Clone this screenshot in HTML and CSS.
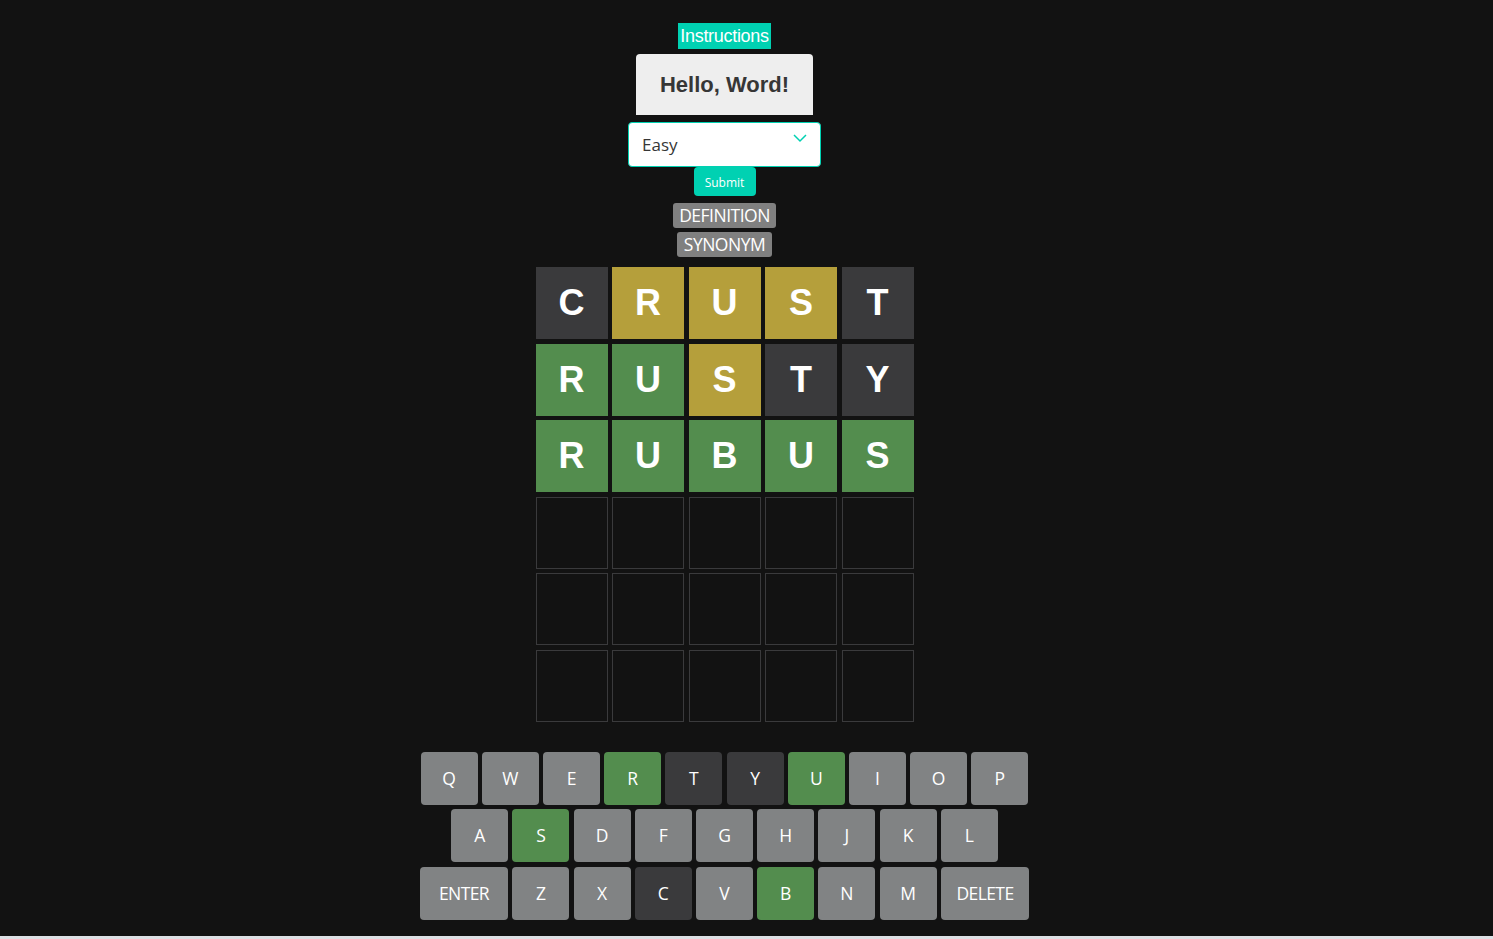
FILE: index.html
```html
<!DOCTYPE html>
<html>
<head>
<meta charset="utf-8">
<link rel="stylesheet" href="styles.css">
</head>
<body>
<div class="app">
  <div class="instructions">Instructions</div>
  <div class="title">Hello, Word!</div>
  <div class="select">
    <span class="select-text">Easy</span>
    <svg class="chev" width="14" height="9" viewBox="0 0 14 9"><path d="M1 1 L7 7 L13 1" fill="none" stroke="#00d1b2" stroke-width="1.5"/></svg>
  </div>
  <div class="submit">Submit</div>
  <div class="hint def">DEFINITION</div>
  <div class="hint syn">SYNONYM</div>
  <div class="board">
    <div class="tile absent">C</div><div class="tile present">R</div><div class="tile present">U</div><div class="tile present">S</div><div class="tile absent">T</div>
    <div class="tile correct">R</div><div class="tile correct">U</div><div class="tile present">S</div><div class="tile absent">T</div><div class="tile absent">Y</div>
    <div class="tile correct">R</div><div class="tile correct">U</div><div class="tile correct">B</div><div class="tile correct">U</div><div class="tile correct">S</div>
    <div class="tile empty"></div><div class="tile empty"></div><div class="tile empty"></div><div class="tile empty"></div><div class="tile empty"></div>
    <div class="tile empty"></div><div class="tile empty"></div><div class="tile empty"></div><div class="tile empty"></div><div class="tile empty"></div>
    <div class="tile empty"></div><div class="tile empty"></div><div class="tile empty"></div><div class="tile empty"></div><div class="tile empty"></div>
  </div>
  <div class="keyboard">
    <div class="krow">
      <div class="key">Q</div><div class="key">W</div><div class="key">E</div><div class="key kcorrect">R</div><div class="key kabsent">T</div><div class="key kabsent">Y</div><div class="key kcorrect">U</div><div class="key">I</div><div class="key">O</div><div class="key">P</div>
    </div>
    <div class="krow">
      <div class="key">A</div><div class="key kcorrect">S</div><div class="key">D</div><div class="key">F</div><div class="key">G</div><div class="key">H</div><div class="key">J</div><div class="key">K</div><div class="key">L</div>
    </div>
    <div class="krow last">
      <div class="key wide">ENTER</div><div class="key">Z</div><div class="key">X</div><div class="key kabsent">C</div><div class="key">V</div><div class="key kcorrect">B</div><div class="key">N</div><div class="key">M</div><div class="key wide">DELETE</div>
    </div>
  </div>
</div>
<div class="taskbar"></div>
</body>
</html>
```
FILE: styles.css
```css
html, body {
  margin: 0;
  padding: 0;
  background: #121212;
  height: 100%;
  overflow: hidden;
}
body {
  position: relative;
  font-family: "Liberation Sans", Arial, sans-serif;
}
.app {
  display: flex;
  flex-direction: column;
  align-items: center;
  padding-top: 23px;
  padding-right: 44px;
}
.instructions {
  background: #00d1b2;
  color: #fff;
  font-size: 18px;
  height: 26px;
  line-height: 26px;
  padding: 0 1px;
  width: 91px;
  text-align: center;
  letter-spacing: -0.3px;
}
.title {
  margin-top: 5px;
  width: 177px;
  height: 61px;
  background: #eeeeee;
  border-radius: 4px 4px 0 0;
  color: #363636;
  font-weight: bold;
  font-size: 22px;
  display: flex;
  align-items: center;
  justify-content: center;
}
.select {
  margin-top: 7px;
  box-sizing: border-box;
  width: 193px;
  height: 45px;
  background: #fff;
  border: 1px solid #00d1b2;
  border-radius: 4px;
  display: flex;
  align-items: center;
  justify-content: space-between;
  padding: 0 13px 0 13px;
  position: relative;
}
.select-text {
  font-family: "Open Sans", sans-serif;
  font-size: 17px;
  color: #363636;
}
.chev {
  margin-top: -12px;
}
.submit {
  width: 62px;
  height: 29px;
  background: #00d1b2;
  border-radius: 4px;
  color: #fff;
  font-family: "Open Sans", sans-serif;
  font-size: 12px;
  display: flex;
  align-items: center;
  justify-content: center;
  padding-top: 1px;
  box-sizing: border-box;
}
.hint {
  background: #808080;
  color: #fff;
  font-family: "Open Sans", sans-serif;
  font-size: 17.5px;
  height: 25px;
  line-height: 25px;
  border-radius: 3px;
  text-align: center;
}
.def {
  margin-top: 7px;
  width: 103px;
  letter-spacing: -0.5px;
}
.syn {
  margin-top: 4px;
  width: 95px;
  letter-spacing: -0.5px;
}
.board {
  margin-top: 10px;
  display: grid;
  grid-template-columns: repeat(5, 72px);
  grid-auto-rows: 72px;
  gap: 4.6px 4.5px;
}
.tile {
  box-sizing: border-box;
  display: flex;
  align-items: center;
  justify-content: center;
  color: #fff;
  font-weight: bold;
  font-size: 36px;
}
.absent { background: #3a3a3c; }
.present { background: #b59f3b; }
.correct { background: #538d4e; }
.empty { border: 1px solid #3a3a3c; }
.keyboard {
  margin-top: 30px;
  display: flex;
  flex-direction: column;
  align-items: center;
  gap: 4px;
}
.krow {
  display: flex;
  gap: 4.2px;
}
.krow.last {
  margin-top: 1px;
}
.key {
  width: 57px;
  height: 53px;
  border-radius: 4px;
  background: #818384;
  color: #fff;
  font-family: "Open Sans", sans-serif;
  font-size: 17.5px;
  display: flex;
  align-items: center;
  justify-content: center;
}
.key.wide {
  width: 88.5px;
  letter-spacing: -0.6px;
}
.kabsent { background: #3a3a3c; }
.kcorrect { background: #538d4e; }
.taskbar {
  position: absolute;
  left: 0;
  right: 0;
  bottom: 0;
  height: 3px;
  background: #dde0e4;
}
```
